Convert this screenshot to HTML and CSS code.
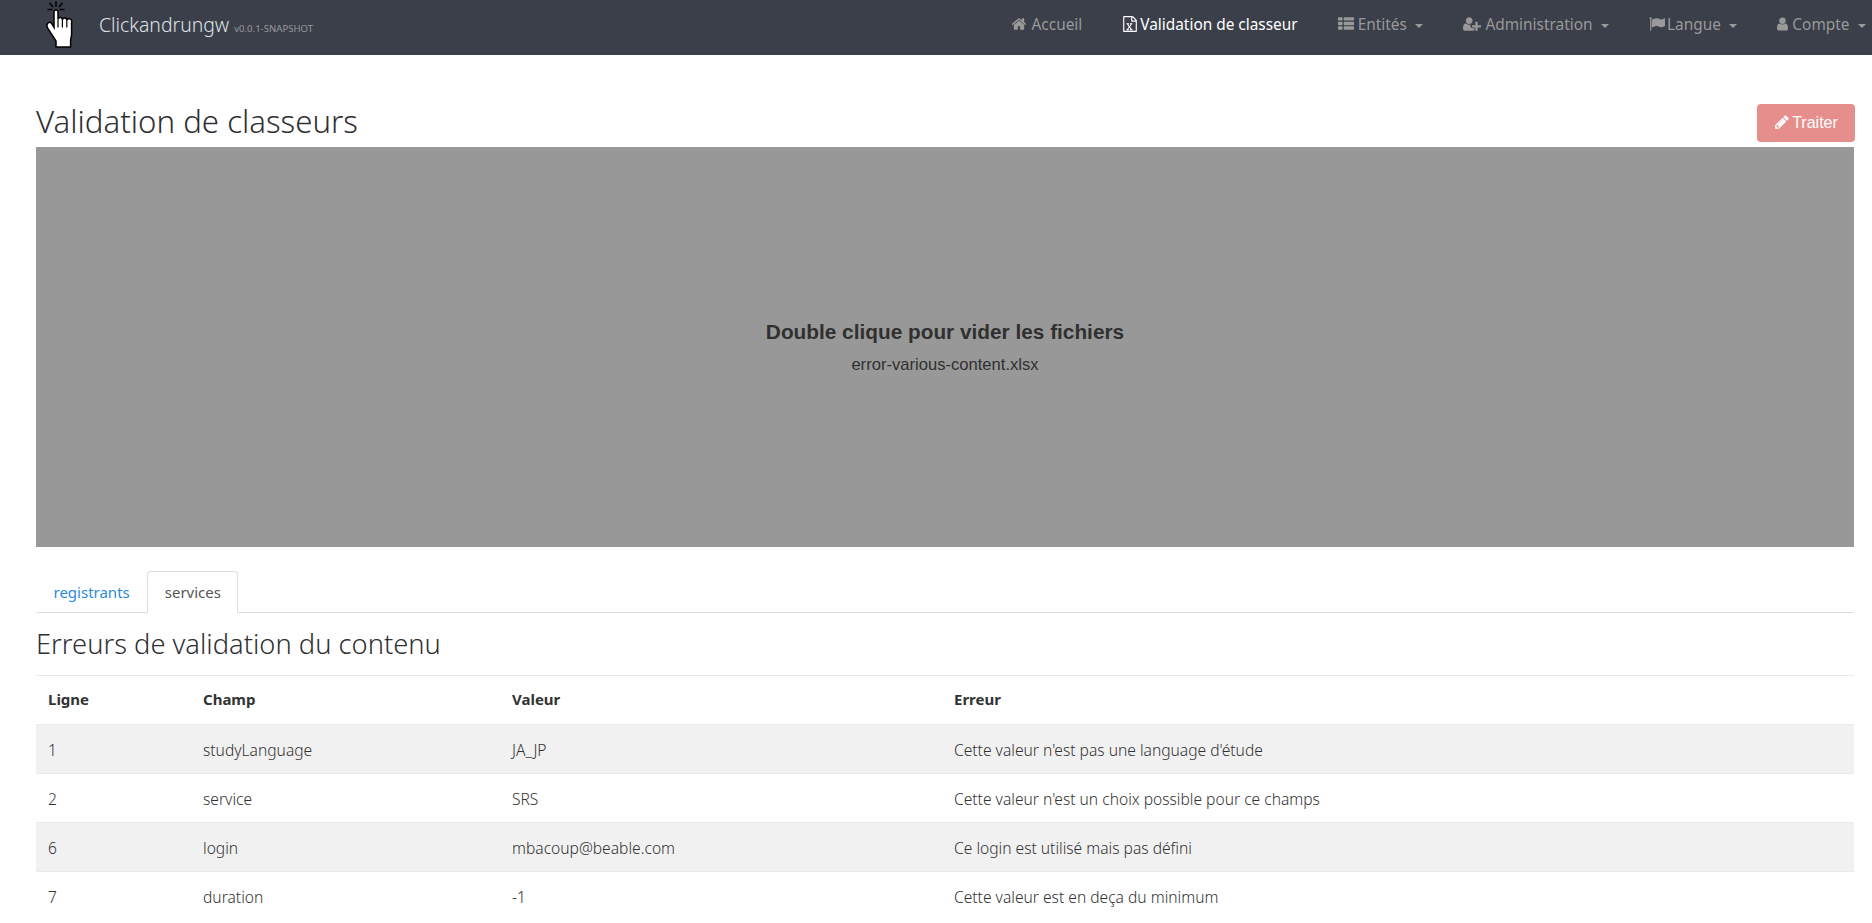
FILE: index.html
```html
<!DOCTYPE html>
<html lang="fr">
<head>
  <meta charset="UTF-8" />
  <title>Clickandrungw</title>
  <link rel="stylesheet" href="styles.css">
</head>
<body>
  <!-- Top bar -->
  <nav class="navbar">
    <a class="brand">
      <svg class="logo" viewBox="0 0 60 50">
        <path d="M26 1.5v5M19.5 3l3.5 4M32.5 3l-3.5 4M17.5 9.5h5M29.5 9.5h5" stroke="#000" stroke-width="1.6" fill="none"/>
        <path d="M24 12a2 2 0 0 1 4 0v7.5a2.2 2.2 0 0 1 4.4 .5a2.2 2.2 0 0 1 4.4 .5a2.4 2.4 0 0 1 4.8 1.5V35l-1 5v7H26v-6L17.5 28q-1.5-3 .5-5t4 1l2 3.5z" fill="#fff" stroke="#000" stroke-width="1.5"/>
        <path d="M28 19.500v8M32.400 20v7.500M36.800 20.500v7" stroke="#000" stroke-width="1.200" fill="none"/>
      </svg>
      <span class="brand-name">Clickandrungw</span>
      <small class="version">v0.0.1-SNAPSHOT</small>
    </a>
    <ul class="nav">
      <li><a><svg class="icon icon-home" viewBox="0 0 1792 1792"><path d="M1472 992v480q0 26-19 45t-45 19h-384v-384h-256v384h-384q-26 0-45-19t-19-45v-480q0-1 .5-3t.5-3l575-474 575 474q1 2 1 6zm223-69l-62 74q-8 9-21 11h-3q-13 0-21-7l-692-577-692 577q-12 8-24 7-13-2-21-11l-62-74q-8-10-7-23.5t11-21.5l719-599q32-26 76-26t76 26l244 204v-195q0-14 9-23t23-9h192q14 0 23 9t9 23v408l219 182q10 8 11 21.5t-7 23.5z"/></svg>Accueil</a></li>
      <li class="active"><a><svg class="icon icon-file" viewBox="0 0 1792 1792"><path d="M1596 380q28 28 48 76t20 88v1152q0 40-28 68t-68 28h-1344q-40 0-68-28t-28-68v-1600q0-40 28-68t68-28h896q40 0 88 20t76 48zm-444-244v376h376q-10-29-22-41l-313-313q-12-12-41-22zm384 1528v-1024h-416q-40 0-68-28t-28-68v-416h-768v1536h1280zm-1043-181v106h281v-106h-75l103-161q5-7 10-16.5t7.5-13.5 3.5-4h2q1 4 5 10 2 4 4.500 7.500t6 8 6.500 8.500l107 161h-76v106h291v-106h-68l-192-273 195-282h67v-107h-279v107h74l-103 159q-4 7-10 16.500t-9 13.500l-2 3h-2q-1-4-5-10-6-11-17-23l-106-159h76v-107h-290v107h68l189 272-194 283h-68z"/></svg>Validation de classeur</a></li>
      <li><a><svg class="icon icon-list" viewBox="0 0 1792 1792"><path d="M512 1248v192q0 40-28 68t-68 28h-320q-40 0-68-28t-28-68v-192q0-40 28-68t68-28h320q40 0 68 28t28 68zm0-512v192q0 40-28 68t-68 28h-320q-40 0-68-28t-28-68v-192q0-40 28-68t68-28h320q40 0 68 28t28 68zm1280 512v192q0 40-28 68t-68 28h-960q-40 0-68-28t-28-68v-192q0-40 28-68t68-28h960q40 0 68 28t28 68zm-1280-1024v192q0 40-28 68t-68 28h-320q-40 0-68-28t-28-68v-192q0-40 28-68t68-28h320q40 0 68 28t28 68zm1280 512v192q0 40-28 68t-68 28h-960q-40 0-68-28t-28-68v-192q0-40 28-68t68-28h960q40 0 68 28t28 68zm0-512v192q0 40-28 68t-68 28h-960q-40 0-68-28t-28-68v-192q0-40 28-68t68-28h960q40 0 68 28t28 68z"/></svg>Entités<span class="caret"></span></a></li>
      <li><a><svg class="icon icon-wide" viewBox="0 0 2048 1792"><path d="M704 896q-159 0-271.500-112.500t-112.500-271.500 112.500-271.500 271.500-112.500 271.500 112.500 112.500 271.500-112.500 271.500-271.500 112.500zm960 128h352q13 0 22.500 9.500t9.500 22.500v192q0 13-9.500 22.500t-22.500 9.500h-352v352q0 13-9.500 22.500t-22.500 9.500h-192q-13 0-22.500-9.500t-9.500-22.500v-352h-352q-13 0-22.500-9.500t-9.500-22.500v-192q0-13 9.500-22.500t22.500-9.500h352v-352q0-13 9.500-22.500t22.500-9.500h192q13 0 22.500 9.500t9.500 22.500v352zm-736 224q0 52 38 90t90 38h256v238q-68 50-171 50h-874q-121 0-194-69t-73-190q0-53 3.500-103.500t14-109 26.500-108.500 43-97.500 62-81 85.500-53.500 111.500-20q19 0 39 17 79 61 154.500 91.500t164.500 30.500 164.500-30.500 154.500-91.500q20-17 39-17 78 0 133 31h-233q-52 0-90 38t-38 90v192z"/></svg>Administration<span class="caret"></span></a></li>
      <li><a><svg class="icon icon-flag" viewBox="0 0 1792 1792"><path d="M320 256q0 72-64 110v1266q0 13-9.500 22.500t-22.500 9.500h-64q-13 0-22.500-9.500t-9.500-22.500v-1266q-64-38-64-110 0-53 37.500-90.500t90.500-37.500 90.500 37.500 37.500 90.500zm1472 64v763q0 25-12.500 38.500t-39.500 27.500q-215 116-369 116-61 0-123.500-22t-108.500-48-115.500-48-142.500-22q-192 0-464 146-17 9-33 9-26 0-45-19t-19-45v-742q0-32 31-55 21-14 79-43 236-120 421-120 107 0 200 29t219 88q38 19 88 19 54 0 117.500-21t110-47 88-47 54.500-21q26 0 45 19t19 45z"/></svg>Langue<span class="caret"></span></a></li>
      <li><a><svg class="icon icon-user" viewBox="256 0 1280 1792"><path d="M1536 1399q0 109-62.500 187t-150.500 78h-854q-88 0-150.500-78t-62.500-187q0-85 8.500-160.500t31.500-152 58.500-131 94-89 134.500-34.500q131 128 313 128t313-128q76 0 134.500 34.500t94 89 58.500 131 31.500 152 8.500 160.500zm-256-887q0 159-112.500 271.500t-271.500 112.500-271.500-112.500-112.500-271.500 112.500-271.500 271.500-112.500 271.500 112.500 112.500 271.500z"/></svg>Compte<span class="caret"></span></a></li>
    </ul>
  </nav>

  <div class="container">
    <div class="page-head">
      <h1>Validation de classeurs</h1>
      <button class="btn-traiter"><svg class="icon icon-pencil" viewBox="0 0 1792 1792"><path d="M491 1536l91-91-235-235-91 91v107h128v128h107zm523-928q0-22-22-22-10 0-17 7l-542 542q-7 7-7 17 0 22 22 22 10 0 17-7l542-542q7-7 7-17zm-54-192l416 416-832 832h-416v-416zm683 96q0 53-37 90l-166 166-416-416 166-165q36-38 90-38 53 0 91 38l235 234q37 39 37 91z"/></svg>Traiter</button>
    </div>

    <div class="dropzone">
      <h4>Double clique pour vider les fichiers</h4>
      <p>error-various-content.xlsx</p>
    </div>

    <ul class="tabs">
      <li><a>registrants</a></li>
      <li class="active"><a>services</a></li>
    </ul>

    <h3>Erreurs de validation du contenu</h3>

    <table class="errors">
      <thead>
        <tr><th class="col-line">Ligne</th><th class="col-field">Champ</th><th class="col-value">Valeur</th><th>Erreur</th></tr>
      </thead>
      <tbody>
        <tr><td>1</td><td>studyLanguage</td><td>JA_JP</td><td>Cette valeur n'est pas une language d'étude</td></tr>
        <tr><td>2</td><td>service</td><td>SRS</td><td>Cette valeur n'est un choix possible pour ce champs</td></tr>
        <tr><td>6</td><td>login</td><td>mbacoup@beable.com</td><td>Ce login est utilisé mais pas défini</td></tr>
        <tr><td>7</td><td>duration</td><td>-1</td><td>Cette valeur est en deça du minimum</td></tr>
      </tbody>
    </table>
  </div>
</body>
</html>
```

FILE: styles.css
```css
* {
  box-sizing: border-box;
}

html, body {
  height: 923px;
  overflow: hidden;
}

body {
  margin: 0;
  font-family: "Noto Sans", sans-serif;
  font-size: 15px;
  color: #333;
  background: #fff;
}

/* navbar */
.navbar {
  height: 55px;
  background: #3a3f4a;
  display: flex;
  justify-content: space-between;
  align-items: flex-start;
}

.brand {
  display: flex;
  align-items: baseline;
}

.logo {
  width: 60px;
  height: 50px;
  margin-left: 30px;
  flex: none;
  align-self: flex-start;
}

.brand-name {
  margin-left: 9px;
  font-size: 19.4px;
  font-weight: 300;
  color: #dfe1e4;
  line-height: 50px;
}

.version {
  margin-left: 5px;
  font-size: 9.6px;
  color: #999;
}

.nav {
  display: flex;
  list-style: none;
  margin: 0 -14px 0 0;
  padding: 0;
}

.nav a {
  display: block;
  padding: 15px 20px 0;
  line-height: 20px;
  font-size: 15.4px;
  color: #999;
  white-space: nowrap;
}

.nav .active a {
  color: #fff;
}

.icon {
  width: 16px;
  height: 16px;
  fill: currentColor;
  vertical-align: -2px;
}

.icon-home {
  margin-right: 5px;
}

.icon-file {
  margin-right: 2px;
}

.icon-list {
  margin-right: 4px;
}

.icon-wide {
  width: 18px;
  margin-right: 4px;
}

.icon-flag {
  margin-right: 2px;
}

.icon-user {
  width: 11px;
  margin-right: 4px;
}

.icon-pencil {
  margin-right: 2px;
}

.caret {
  display: inline-block;
  margin-left: 8.5px;
  vertical-align: middle;
  border-top: 4px solid currentColor;
  border-left: 4px solid transparent;
  border-right: 4px solid transparent;
}

/* content */
.container {
  padding: 0 18px 0 36px;
}

.page-head {
  height: 92px;
  display: flex;
  justify-content: space-between;
  align-items: flex-end;
}

h1 {
  margin: 0 0 8px;
  font-size: 31.2px;
  font-weight: 300;
  line-height: 36px;
  color: #2f3033;
}

.btn-traiter {
  height: 38px;
  width: 98px;
  margin: 0 -1px 5px 0;
  padding: 0;
  border: none;
  border-radius: 4px;
  background: #e58e8b;
  color: #fff;
  font-family: "Liberation Sans", sans-serif;
  font-size: 16px;
}

.dropzone {
  height: 400px;
  background: #989898;
  display: flex;
  flex-direction: column;
  justify-content: center;
  align-items: center;
  font-family: "Liberation Sans", sans-serif;
  color: #303030;
}

.dropzone h4 {
  margin: 0 0 7px;
  font-size: 20.8px;
  line-height: 30px;
}

.dropzone p {
  margin: 0 0 2px;
  font-size: 16.6px;
  line-height: 22px;
}

.tabs {
  display: flex;
  list-style: none;
  margin: 24px 0 0;
  padding: 0;
  height: 42px;
  border-bottom: 1px solid #ddd;
}

.tabs a {
  display: block;
  height: 42px;
  padding: 10px 16.5px;
  line-height: 20px;
  color: #2a8adf;
  border: 1px solid transparent;
  border-radius: 4px 4px 0 0;
}

.tabs .active a {
  color: #555;
  background: #fff;
  border-color: #ddd #ddd #fff;
}

h3 {
  margin: 0;
  padding: 13px 0 14px;
  font-size: 27.3px;
  font-weight: 300;
  line-height: 35px;
  color: #2f3033;
}

.errors {
  width: 100%;
  border-collapse: collapse;
  table-layout: fixed;
}

.errors th, .errors td {
  height: 49px;
  padding: 0 12px;
  text-align: left;
  border-top: 1px solid #eaeaea;
}

.errors th {
  font-weight: 700;
  padding-bottom: 2px;
}

.errors td {
  padding-top: 1px;
  font-size: 15.6px;
  font-weight: 300;
}

.errors tbody tr:nth-child(odd) {
  background: #f1f1f1;
}

.col-line {
  width: 155px;
}

.col-field {
  width: 309px;
}

.col-value {
  width: 442px;
}
```
